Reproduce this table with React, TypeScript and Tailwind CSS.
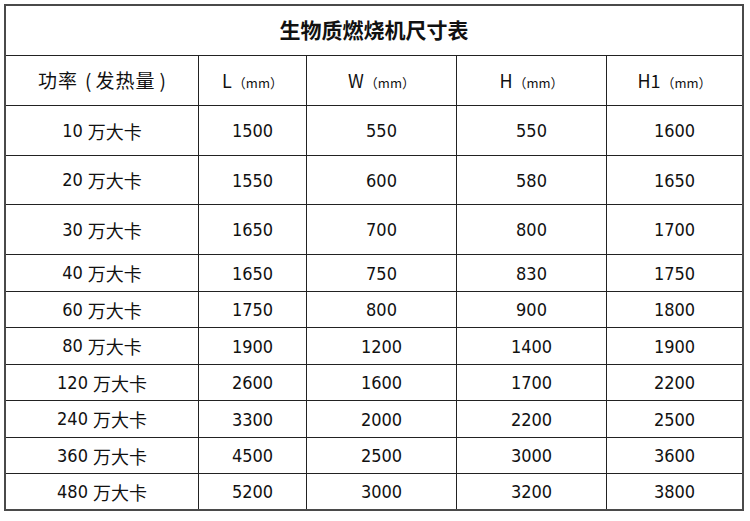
import React from "react";

const rows: [string, string, string, string, string, number][] = [
  ["10", "1500", "550", "550", "1600", 50],
  ["20", "1550", "600", "580", "1650", 49],
  ["30", "1650", "700", "800", "1700", 50],
  ["40", "1650", "750", "830", "1750", 37],
  ["60", "1750", "800", "900", "1800", 36],
  ["80", "1900", "1200", "1400", "1900", 37],
  ["120", "2600", "1600", "1700", "2200", 36],
  ["240", "3300", "2000", "2200", "2500", 37],
  ["360", "4500", "2500", "3000", "3600", 36],
  ["480", "5200", "3000", "3200", "3800", 35],
];

const cjk = { fontFamily: '"Noto Sans CJK SC", "Noto Sans", sans-serif' };
const num = { fontFamily: '"DejaVu Sans Condensed", "DejaVu Sans", "Noto Sans CJK SC", sans-serif' };

function HeadCell({ main, last }: { main: string; last?: boolean }) {
  return (
    <div
      className={`flex items-center justify-center text-[#111] ${last ? "" : "border-r border-[#222]"}`}
      style={cjk}
    >
      <span className="flex items-baseline">
        <span className="text-[18px]">{main}</span>
        <span className="text-[13px] ml-[1px]">（mm）</span>
      </span>
    </div>
  );
}

export default function App() {
  return (
    <div className="w-[750px] h-[521px] bg-white">
      <div className="ml-[4px] pt-[4px]">
        <div className="w-[740px] border-2 border-[#4a4a4a] bg-white">
          <div
            className="h-[50px] border-b border-[#222] flex items-center justify-center text-[21px] font-bold text-[#111] pb-[1px]"
            style={cjk}
          >
            生物质燃烧机尺寸表
          </div>
          <div className="grid grid-cols-[193px_108px_150px_150px_135px] h-[50px] border-b border-[#222]">
            <div
              className="flex items-center justify-center border-r border-[#222] text-[19px] text-[#111]"
              style={cjk}
            >
              <span className="flex items-baseline">
                <span className="tracking-[1px]">功率</span>
                <span className="ml-[7px] mr-[4px]">(</span>
                <span className="tracking-[1px]">发热量</span>
                <span className="ml-[4px]">)</span>
              </span>
            </div>
            <HeadCell main="L" />
            <HeadCell main="W" />
            <HeadCell main="H" />
            <HeadCell main="H1" last />
          </div>
          {rows.map((r, i) => (
            <div
              key={r[0]}
              className={`grid grid-cols-[193px_108px_150px_150px_135px] ${
                i < rows.length - 1 ? "border-b border-[#222]" : ""
              }`}
              style={{ height: r[5] }}
            >
              <div className="flex items-center justify-center border-r border-[#222] text-[#111]">
                <span className="text-[18px] leading-none" style={num}>
                  {r[0]}
                </span>
                <span className="text-[18px] leading-none ml-[5px]" style={cjk}>
                  万大卡
                </span>
              </div>
              {[r[1], r[2], r[3], r[4]].map((v, j) => (
                <div
                  key={j}
                  className={`flex items-center justify-center text-[18px] text-[#111] ${
                    j < 3 ? "border-r border-[#222]" : ""
                  }`}
                  style={num}
                >
                  {v}
                </div>
              ))}
            </div>
          ))}
        </div>
      </div>
    </div>
  );
}
